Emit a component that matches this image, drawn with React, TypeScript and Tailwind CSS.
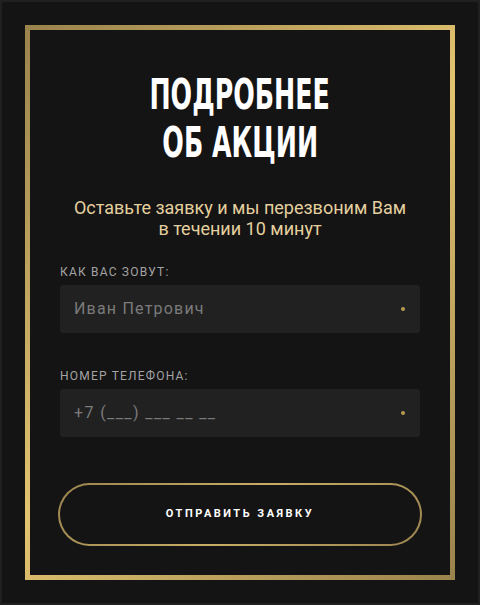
import React from "react";

export default function App() {
  const roboto = { fontFamily: "Roboto, 'Liberation Sans', sans-serif" };
  return (
    <div
      className="w-[480px] h-[605px] bg-[#141414] border-2 border-[#202020] p-[23px]"
      style={roboto}
    >
      <div className="w-[430px] h-[555px] p-[5px] bg-[linear-gradient(135deg,#9a834c_0%,#e2c36f_50%,#9a834c_100%)]">
        <div className="w-full h-full bg-[#141414] px-[30px] pt-[41px] flex flex-col">
          <h1
            className="text-white text-[42px] leading-[48px] font-bold text-center uppercase"
            style={{ fontFamily: "'Liberation Sans Narrow', 'DejaVu Sans Condensed', 'Liberation Sans', sans-serif" }}
          >
            <span className="inline-block scale-x-[0.67]">Подробнее</span>
            <br />
            <span className="inline-block scale-x-[0.67]">об акции</span>
          </h1>
          <p className="mt-[30px] text-[18px] leading-[21px] text-[#e4d09f] text-center">
            Оставьте заявку и мы перезвоним Вам
            <br />в течении 10 минут
          </p>
          <label className="mt-[25px] text-[12px] leading-[16px] tracking-[1.2px] text-[#a3a3a3] uppercase">
            Как вас зовут:
          </label>
          <div className="mt-[5px] h-[48px] rounded-[3px] bg-[#212121] flex items-center justify-between pl-[14px] pr-[15px]">
            <span className="text-[16px] tracking-[1.2px] text-[#7b7b7b]">Иван Петрович</span>
            <span className="w-[4px] h-[4px] rounded-full bg-[#b89a55]" />
          </div>
          <label className="mt-[35px] text-[12px] leading-[16px] tracking-[1.2px] text-[#a3a3a3] uppercase">
            Номер телефона:
          </label>
          <div className="mt-[5px] h-[48px] rounded-[3px] bg-[#212121] flex items-center justify-between pl-[14px] pr-[15px]">
            <span className="text-[16px] tracking-[1.4px] text-[#7b7b7b]">+7 (___) ___ __ __</span>
            <span className="w-[4px] h-[4px] rounded-full bg-[#b89a55]" />
          </div>
          <div className="mt-[46px] -mx-[2px] h-[63px] rounded-full p-[2px] bg-[linear-gradient(135deg,#9a844f_0%,#c9ad66_50%,#9a844f_100%)]">
            <div className="w-full h-full rounded-full bg-[#141414] flex items-center justify-center">
              <span className="text-white text-[11px] font-bold tracking-[2.5px] uppercase">
                Отправить заявку
              </span>
            </div>
          </div>
        </div>
      </div>
    </div>
  );
}
